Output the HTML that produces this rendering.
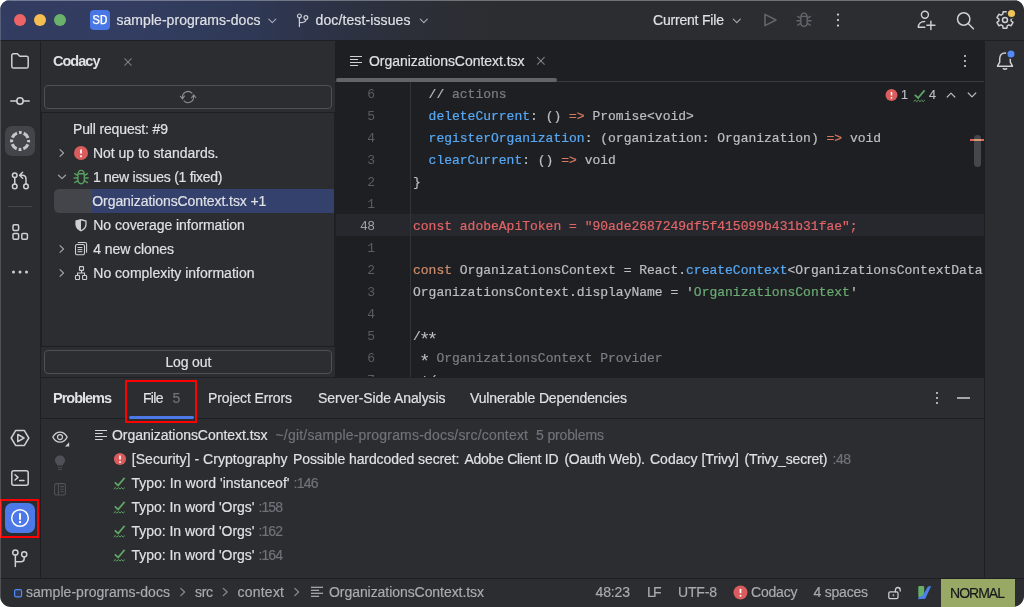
<!DOCTYPE html>
<html lang="en">
<head>
<meta charset="utf-8">
<title>sample-programs-docs – OrganizationsContext.tsx</title>
<style>
html,body{margin:0;padding:0;background:#fff;}
body{width:1024px;height:607px;overflow:hidden;position:relative;font-family:"Liberation Sans",sans-serif;}
#win{position:absolute;left:0;top:0;width:1024px;height:607px;border-radius:10px 10px 11px 11px;overflow:hidden;background:#2B2D30;will-change:transform;}
#win div,#win svg{position:absolute;}
.t{-webkit-text-stroke:0.18px currentColor;white-space:pre;height:20px;line-height:20px;font-size:13.5px;color:#DFE1E5;}
.ln{transform:translateY(2px);left:336px;width:38.4px;letter-spacing:-0.6px;height:22px;line-height:22px;text-align:right;font-family:"Liberation Mono",monospace;font-size:13px;color:#5A5D65;}
.cl{transform:translateY(2px);left:413px;height:22px;line-height:22px;white-space:pre;font-family:"Liberation Mono",monospace;font-size:13px;color:#BCBEC4;}
.cl span{position:static;-webkit-text-stroke:0.2px currentColor;}
.cl span.a{display:inline-block;width:7.8px;height:14px;line-height:14px;font-size:19px;text-indent:-1.8px;position:relative;top:4.8px;vertical-align:baseline;-webkit-text-stroke:0;}
svg{overflow:visible;fill:none;}
.s{stroke:#CED0D6;stroke-width:1.2;stroke-linecap:round;stroke-linejoin:round;fill:none;}
.d{stroke:#5A5D63;stroke-width:1.2;stroke-linecap:round;stroke-linejoin:round;fill:none;}
</style>
</head>
<body>
<div id="win">
<!-- title bar -->
<div id="titlebar" style="left:0;top:0;width:1024px;height:40px;background:linear-gradient(90deg,#313C60 0,#323D61 140px,#2F3855 250px,#2D3346 330px,#2C2F38 410px,#2B2D30 500px);"></div>
<div style="left:0;top:40px;width:1024px;height:1px;background:#1E1F22"></div>
<div style="left:14px;top:14px;width:12px;height:12px;border-radius:6px;background:#EC6466"></div>
<div style="left:34px;top:14px;width:12px;height:12px;border-radius:6px;background:#F4BE50"></div>
<div style="left:54px;top:14px;width:12px;height:12px;border-radius:6px;background:#6AB26C"></div>
<div style="left:90px;top:10px;width:20px;height:20px;border-radius:4px;background:#4876E4;"></div>
<div style="left:90px;top:10px;width:20px;height:20px;line-height:21px;text-align:center;color:#fff;font-family:'Liberation Mono',monospace;font-size:13px;letter-spacing:-0.3px;text-indent:-0.3px;-webkit-text-stroke:0.25px #fff;">SD</div>

<!-- main areas -->
<div id="stripeL" style="left:0;top:41px;width:40px;height:537px;background:#2B2D30"></div>
<div style="left:40px;top:41px;width:1px;height:537px;background:#1E1F22"></div>
<div id="editor" style="left:335px;top:41px;width:649px;height:336px;background:#1E1F22;overflow:hidden"></div>
<div style="left:984px;top:41px;width:1px;height:537px;background:#1E1F22"></div>
<div style="left:41px;top:377px;width:943px;height:1px;background:#1E1F22"></div>
<div style="left:0;top:578px;width:1024px;height:1px;background:#1E1F22"></div>

<!-- ===== title bar icons ===== -->
<svg style="left:268px;top:18px;transform:translate(0.3px,0.6px)" width="8" height="5"><path class="s" style="stroke:#A9ACB3;stroke-width:1.1" d="M0.5 0.5 L4 4 L7.5 0.5"/></svg>
<svg style="left:419px;top:18px;transform:translate(0.8px,0.6px)" width="8" height="5"><path class="s" style="stroke:#A9ACB3;stroke-width:1.1" d="M0.5 0.5 L4 4 L7.5 0.5"/></svg>
<svg style="left:732px;top:18px;transform:translate(0.8px,0.6px)" width="8" height="5"><path class="s" style="stroke:#A9ACB3;stroke-width:1.1" d="M0.5 0.5 L4 4 L7.5 0.5"/></svg>
<!-- branch -->
<svg style="left:296px;top:12px" width="14" height="16"><circle class="s" cx="3.4" cy="3.9" r="1.9"/><circle class="s" cx="9.9" cy="5.6" r="1.9"/><path class="s" d="M3.4 5.8 V14.6 M9.9 7.5 C9.9 10.2 7.5 10.7 3.6 10.7"/></svg>
<!-- run (disabled) -->
<svg style="left:762px;top:12px" width="16" height="16"><path class="d" style="stroke:#62656C;stroke-width:1.6" d="M3 2.4 L14 8 L3 13.6 Z"/></svg>
<!-- debug (disabled) -->
<svg style="left:795px;top:11px;transform:translate(0.9px,0.7px)" width="16" height="16"><path style="stroke:#62656C;stroke-width:1.4;stroke-linecap:butt;fill:none" d="M4.9 6.2 C4.9 3 6.2 1.4 8.1 1.4 C10 1.4 11.3 3 11.3 6.2 V10.6 C11.3 13.4 10 14.7 8.1 14.7 C6.2 14.7 4.9 13.4 4.9 10.6 Z M5.2 4.7 H11 M4.9 6.6 L1.3 4.3 M11.3 6.6 L14.9 4.3 M4.9 9 H0.6 M11.3 9 H15.6 M5 11.5 L1.3 13.8 M11.2 11.5 L14.9 13.8"/></svg>
<!-- kebab -->
<svg style="left:836px;top:12px" width="4" height="16"><circle cx="2" cy="2.6" r="1.15" fill="#CED0D6"/><circle cx="2" cy="8.1" r="1.15" fill="#CED0D6"/><circle cx="2" cy="13.6" r="1.15" fill="#CED0D6"/></svg>
<!-- add user -->
<svg style="left:916px;top:10px" width="20" height="20"><circle class="s" style="stroke-width:1.45" cx="8.9" cy="4.8" r="3.5"/><path class="s" style="stroke-width:1.45" d="M8.6 11.5 C5 11.5 2.4 13.8 2.3 17.2 H8.8 M14.9 11.2 V19.4 M10.9 15.2 H18.9"/></svg>
<!-- search -->
<svg style="left:956px;top:11px;transform:translate(0.0px,0.5px)" width="18" height="18"><circle class="s" style="stroke-width:1.5" cx="7.7" cy="7.5" r="6.2"/><path class="s" style="stroke-width:1.5" d="M12.2 12 L17.4 17.2"/></svg>
<!-- settings -->
<svg style="left:996px;top:10px" width="18" height="20"><path class="s" style="stroke-width:1.5" d="M11.22 4.21 L10.89 1.82 L7.11 1.82 L6.78 4.21 L5.10 5.18 L2.86 4.27 L0.97 7.54 L2.88 9.03 L2.88 10.97 L0.97 12.46 L2.86 15.73 L5.10 14.82 L6.78 15.79 L7.11 18.18 L10.89 18.18 L11.22 15.79 L12.90 14.82 L15.14 15.73 L17.03 12.46 L15.12 10.97 L15.12 9.03 L17.03 7.54 L15.14 4.27 L12.90 5.18 Z"/><circle class="s" style="stroke-width:1.5" cx="9" cy="10" r="2.5"/></svg>
<svg style="left:1006px;top:8px" width="11" height="11"><circle cx="5.5" cy="5.5" r="5.2" fill="#2B2D30"/><circle cx="5.5" cy="5.5" r="3.6" fill="#F2C55C"/></svg>

<!-- ===== left stripe ===== -->
<!-- folder -->
<svg style="left:10px;top:51px" width="20" height="20"><path class="s" style="stroke-width:1.5" d="M1.8 4.4 C1.8 3.5 2.5 2.8 3.4 2.8 H7.4 L9.8 5.2 H16.6 C17.5 5.2 18.2 5.9 18.2 6.8 V15.4 C18.2 16.3 17.5 17 16.6 17 H3.4 C2.5 17 1.8 16.3 1.8 15.4 Z"/></svg>
<!-- commit -->
<svg style="left:10px;top:91px" width="20" height="20"><circle class="s" style="stroke-width:1.5" cx="10" cy="10" r="3.2"/><path class="s" style="stroke-width:1.5" d="M0.8 10 H6.8 M13.2 10 H19.2"/></svg>
<!-- codacy active -->
<div style="left:5px;top:126px;width:30px;height:30px;border-radius:7px;background:#43454A"></div>
<svg style="left:10px;top:131px" width="20" height="20"><circle cx="10.1" cy="10" r="8.5" fill="none" stroke="#C4C6CC" stroke-width="3.1" stroke-dasharray="2.8 2 6.55 2" stroke-dashoffset="1.4"/></svg>
<!-- pull requests -->
<svg style="left:10px;top:171px" width="20" height="20"><circle class="s" style="stroke-width:1.5" cx="4.75" cy="4.25" r="2.3"/><circle class="s" style="stroke-width:1.5" cx="4.75" cy="15.4" r="2.3"/><circle class="s" style="stroke-width:1.5" cx="16" cy="15.4" r="2.3"/><path class="s" style="stroke-width:1.5" d="M4.75 6.6 V13.1 M16 13.1 V8 C16 5.6 14.8 4.2 12.4 4.2 H10 M12.6 1.2 L9.6 4.2 L12.6 7.2"/></svg>
<div style="left:8px;top:206px;width:24px;height:1px;background:#43454A"></div>
<!-- structure-like (3 squares) -->
<svg style="left:10px;top:223px" width="20" height="20"><rect class="s" style="stroke-width:1.5" x="3" y="1.8" width="5.6" height="5.6" rx="1.2"/><rect class="s" style="stroke-width:1.5" x="3" y="10.4" width="5.6" height="5.9" rx="1.2"/><rect class="s" style="stroke-width:1.5" x="11.8" y="10.4" width="5.6" height="5.9" rx="1.2"/></svg>
<!-- more -->
<svg style="left:10px;top:262px" width="20" height="20"><circle cx="3.5" cy="10" r="1.5" fill="#CED0D6"/><circle cx="10" cy="10" r="1.5" fill="#CED0D6"/><circle cx="16.5" cy="10" r="1.5" fill="#CED0D6"/></svg>
<!-- services -->
<svg style="left:10px;top:428px" width="20" height="20"><path class="s" style="stroke-width:1.5" d="M5.6 2.6 H14.4 L18.8 10 L14.4 17.4 H5.6 L1.2 10 Z M7.8 6.4 L14 10 L7.8 13.6 Z"/></svg>
<!-- terminal -->
<svg style="left:10px;top:468px" width="20" height="20"><rect class="s" style="stroke-width:1.5" x="1.8" y="2.8" width="16.4" height="14.4" rx="2"/><path class="s" style="stroke-width:1.5" d="M5 6.8 L8 9.4 L5 12 M9.6 12.6 H14"/></svg>
<!-- problems active -->
<div style="left:5px;top:503px;width:30px;height:30px;border-radius:7px;background:#4C78E8"></div>
<svg style="left:10px;top:508px" width="20" height="20"><circle cx="10" cy="10" r="8.3" fill="none" stroke="#fff" stroke-width="1.5"/><path d="M10 5.2 V11.7" stroke="#fff" stroke-width="2" stroke-linecap="butt"/><circle cx="10" cy="14" r="1.2" fill="#fff"/></svg>
<div style="left:0px;top:499px;width:35px;height:35px;border:2px solid #FF0000;"></div>
<!-- git -->
<svg style="left:10px;top:548px" width="20" height="20"><circle class="s" style="stroke-width:1.5" cx="5.35" cy="4.5" r="2.6"/><circle class="s" style="stroke-width:1.5" cx="14.2" cy="6.3" r="2.6"/><path class="s" style="stroke-width:1.5" d="M5.35 7.2 V18.6 M14.2 9 V10.6 C14.2 12.6 13.2 13.7 11.2 13.7 H5.6"/></svg>

<!-- ===== right stripe: bell ===== -->
<svg style="left:995px;top:51px" width="20" height="20"><path class="s" style="stroke-width:1.5" d="M2.5 15.2 L4.7 11.2 V8 C4.7 4.4 6.8 1.9 10 1.9 C13.2 1.9 15.3 4.4 15.3 8 V11.2 L17.5 15.2 Z M8.3 17.7 Q10 18.9 11.7 17.7"/></svg>
<svg style="left:1005px;top:48px;transform:translate(0.5px,0.5px)" width="11" height="11"><circle cx="5.5" cy="5.5" r="5" fill="#2B2D30"/><circle cx="5.5" cy="5.5" r="3.5" fill="#548AF7"/></svg>

<!-- ===== tool window ===== -->
<svg style="left:124px;top:58px" width="8" height="8"><path class="s" style="stroke:#7C7F86;stroke-width:1.05" d="M0.7 0.7 L7.3 7.3 M7.3 0.7 L0.7 7.3"/></svg>
<div style="left:44px;top:85px;width:286px;height:22px;border:1px solid #4E5157;border-radius:4px;"></div>
<svg style="left:180px;top:89px" width="16" height="16"><path class="s" style="stroke:#8C8F96;stroke-width:1.1" d="M12 4.1 A5.6 5.6 0 0 0 2.5 8.6 M0.4 7.4 L2.5 9.9 L4.5 7 M4 11.9 A5.6 5.6 0 0 0 13.6 7.4 M11.6 8.8 L13.7 5.9 L15.8 8.5"/></svg>
<div style="left:41px;top:112px;width:294px;height:1px;background:#1E1F22"></div>
<div style="left:41px;top:113px;width:1px;height:233px;background:#1E1F22"></div>
<div style="left:41px;top:346px;width:294px;height:1px;background:#1E1F22"></div>
<div style="left:334px;top:113px;width:1px;height:233px;background:#1E1F22"></div>
<div style="left:54px;top:189px;width:44px;height:24px;border-radius:5px;background:#43454A"></div>
<div style="left:92px;top:189px;width:242px;height:24px;background:#34416D"></div>
<!-- chevrons -->
<svg style="left:59px;top:148px" width="6" height="10"><path class="s" style="stroke:#9DA0A8" d="M1 1.6 L4.5 5 L1 8.4"/></svg>
<svg style="left:59px;top:244px" width="6" height="10"><path class="s" style="stroke:#9DA0A8" d="M1 1.6 L4.5 5 L1 8.4"/></svg>
<svg style="left:59px;top:268px" width="6" height="10"><path class="s" style="stroke:#9DA0A8" d="M1 1.6 L4.5 5 L1 8.4"/></svg>
<svg style="left:57px;top:174px" width="10" height="6"><path class="s" style="stroke:#9DA0A8" d="M1.5 1.2 L5 4.6 L8.5 1.2"/></svg>
<!-- error circle -->
<svg style="left:74px;top:146px" width="14" height="14"><circle cx="7" cy="7" r="7" fill="#DB5C5C"/><path d="M7 3.4 V7.6" stroke="#fff" stroke-width="1.7" stroke-linecap="butt"/><circle cx="7" cy="10.2" r="1" fill="#fff"/></svg>
<!-- green bug -->
<svg style="left:73px;top:169px" width="16" height="16"><path style="stroke:#5A9E5F;stroke-width:1.4;stroke-linecap:butt;fill:none" d="M4.9 6.2 C4.9 3 6.2 1.4 8.1 1.4 C10 1.4 11.3 3 11.3 6.2 V10.6 C11.3 13.4 10 14.7 8.1 14.7 C6.2 14.7 4.9 13.4 4.9 10.6 Z M5.2 4.7 H11 M4.9 6.6 L1.3 4.3 M11.3 6.6 L14.9 4.3 M4.9 9 H0.6 M11.3 9 H15.6 M5 11.5 L1.3 13.8 M11.2 11.5 L14.9 13.8"/></svg>
<!-- shield -->
<svg style="left:74px;top:218px" width="14" height="14"><path d="M7 1 L12.6 2.6 V6.6 C12.6 10 10.2 12.2 7 13.4 C3.8 12.2 1.4 10 1.4 6.6 V2.6 Z" fill="#CED0D6"/><path d="M7 2.4 L11.3 3.6 V6.6 C11.3 9.2 9.5 10.9 7 12 Z" fill="#2B2D30"/></svg>
<!-- clones -->
<svg style="left:74px;top:242px" width="14" height="14"><rect class="s" style="stroke-width:1.1" x="1.5" y="2.5" width="9" height="10.2" rx="1.5"/><path class="s" style="stroke-width:1.1" d="M4.2 0.5 H11 C12 0.5 12.6 1.1 12.6 2.1 V10.2"/><path stroke="#CED0D6" stroke-width="1" d="M3.6 5.5 H8.4 M3.6 7.6 H8.4 M3.6 9.7 H8.4"/></svg>
<!-- complexity -->
<svg style="left:74px;top:266px" width="14" height="14"><rect class="s" style="stroke-width:1.1" x="5.5" y="0.6" width="4" height="3.8" rx="0.5"/><rect class="s" style="stroke-width:1.1" x="1.5" y="9.5" width="4" height="4" rx="0.5"/><rect class="s" style="stroke-width:1.1" x="8.6" y="9.5" width="4" height="4" rx="0.5"/><path class="s" style="stroke-width:1.1" d="M7.5 4.5 V7 M3.5 9.5 V7 H10.6 V9.5"/></svg>
<!-- log out button -->
<div style="left:44px;top:350px;width:286px;height:22px;border:1px solid #4E5157;border-radius:4px;"></div>

<!-- ===== editor tab ===== -->
<svg style="left:350px;top:56px;transform:translate(0.0px,0.5px)" width="12" height="10"><path stroke="#CED0D6" stroke-width="1.15" d="M0 0 H12 M0 3 H8.1 M0 6 H12 M0 9 H8.1"/></svg>
<svg style="left:537px;top:57px" width="8" height="8"><path class="s" style="stroke:#7E8288;stroke-width:1.05" d="M0.4 0.4 L7.3 7.3 M7.3 0.4 L0.4 7.3"/></svg>
<div style="left:335px;top:81px;width:649px;height:1px;background:#393B40"></div>
<div style="left:336px;top:78px;width:221px;height:3.5px;border-radius:2px;background:#626469"></div>
<svg style="left:963px;top:54px" width="4" height="14"><circle cx="2" cy="2" r="1.05" fill="#CED0D6"/><circle cx="2" cy="7" r="1.05" fill="#CED0D6"/><circle cx="2" cy="12" r="1.05" fill="#CED0D6"/></svg>

<!-- ===== bottom panel ===== -->
<div style="left:41px;top:418px;width:943px;height:1px;background:#1E1F22"></div>
<div style="left:129px;top:415.5px;width:64.5px;height:3.5px;border-radius:2px;background:#4C78E8"></div>
<div style="left:125px;top:380px;width:68px;height:39px;border:2px solid #FF0000;"></div>
<svg style="left:935px;top:391px" width="4" height="14"><circle cx="2" cy="2" r="1.05" fill="#CED0D6"/><circle cx="2" cy="7" r="1.05" fill="#CED0D6"/><circle cx="2" cy="12" r="1.05" fill="#CED0D6"/></svg>
<div style="left:956.5px;top:397.4px;width:13.3px;height:1.3px;background:#A4A6AC"></div>
<!-- eye -->
<svg style="left:52px;top:429px;transform:translate(0.0px,0.5px)" width="17" height="16"><path class="s" d="M0.8 7.6 C2.6 4.2 5.2 2.6 8 2.6 C10.8 2.6 13.4 4.2 15.2 7.6 C13.4 11 10.8 12.6 8 12.6 C5.2 12.6 2.6 11 0.8 7.6 Z"/><circle class="s" cx="8" cy="7.6" r="2.5"/><path d="M17.2 12.8 V17 H13 Z" fill="#CED0D6"/></svg>
<!-- bulb dim -->
<svg style="left:54px;top:455px" width="12" height="15"><path d="M6 0.6 C3 0.6 1 2.8 1 5.4 C1 7.2 2 8.4 3 9.2 V10.6 H9 V9.2 C10 8.4 11 7.2 11 5.4 C11 2.8 9 0.6 6 0.6 Z" fill="#4E5157"/><path d="M3.6 12.3 H8.4 M3.9 14.4 H8.1" stroke="#4E5157" stroke-width="0.9"/></svg>
<!-- layout dim -->
<svg style="left:54px;top:483px" width="12" height="13"><rect x="0.6" y="0.6" width="10.8" height="11.4" rx="1.6" fill="none" stroke="#4E5157" stroke-width="1.1"/><path d="M4.4 0.6 V12 M6.2 3.6 H9.8 M6.2 6.2 H9.8 M6.2 8.8 H9.8" stroke="#4E5157" stroke-width="1.1"/></svg>
<!-- file icon -->
<svg style="left:95px;top:430px;transform:translate(0.0px,0.5px)" width="12" height="10"><path stroke="#D2D4D9" stroke-width="1.1" d="M0 0 H12 M0 3 H7.7 M0 6 H12 M0 9 H7.7"/></svg>
<!-- error -->
<svg style="left:113px;top:452px;transform:translate(0.5px,0.5px)" width="13" height="13"><circle cx="6.5" cy="6.5" r="6.1" fill="#D95B5D"/><path d="M6.5 3.1 V7" stroke="#fff" stroke-width="1.6" stroke-linecap="butt"/><circle cx="6.5" cy="9.5" r="0.95" fill="#fff"/></svg>
<svg style="left:113px;top:475px;transform:translate(0.0px,0.5px)" width="14" height="15"><path d="M1.8 6.9 L5.1 10 L11.6 2.3" stroke="#5FA463" stroke-width="1.8" fill="none" stroke-linecap="butt" stroke-linejoin="miter"/><path d="M0.6 13.6 L2.2 12.1 L3.8 13.6 L5.4 12.1 L7 13.6 L8.6 12.1 L10.2 13.6 L11.8 12.1" stroke="#5FA463" stroke-width="1" fill="none"/></svg>
<svg style="left:113px;top:499px;transform:translate(0.0px,0.5px)" width="14" height="15"><path d="M1.8 6.9 L5.1 10 L11.6 2.3" stroke="#5FA463" stroke-width="1.8" fill="none" stroke-linecap="butt" stroke-linejoin="miter"/><path d="M0.6 13.6 L2.2 12.1 L3.8 13.6 L5.4 12.1 L7 13.6 L8.6 12.1 L10.2 13.6 L11.8 12.1" stroke="#5FA463" stroke-width="1" fill="none"/></svg>
<svg style="left:113px;top:523px;transform:translate(0.0px,0.5px)" width="14" height="15"><path d="M1.8 6.9 L5.1 10 L11.6 2.3" stroke="#5FA463" stroke-width="1.8" fill="none" stroke-linecap="butt" stroke-linejoin="miter"/><path d="M0.6 13.6 L2.2 12.1 L3.8 13.6 L5.4 12.1 L7 13.6 L8.6 12.1 L10.2 13.6 L11.8 12.1" stroke="#5FA463" stroke-width="1" fill="none"/></svg>
<svg style="left:113px;top:547px;transform:translate(0.0px,0.5px)" width="14" height="15"><path d="M1.8 6.9 L5.1 10 L11.6 2.3" stroke="#5FA463" stroke-width="1.8" fill="none" stroke-linecap="butt" stroke-linejoin="miter"/><path d="M0.6 13.6 L2.2 12.1 L3.8 13.6 L5.4 12.1 L7 13.6 L8.6 12.1 L10.2 13.6 L11.8 12.1" stroke="#5FA463" stroke-width="1" fill="none"/></svg>


<!-- ===== inspection widget ===== -->
<svg style="left:885px;top:89px;transform:translate(0.5px,0.0px)" width="12" height="12"><circle cx="6" cy="6" r="6" fill="#DB5C5C"/><path d="M6 2.9 V6.5" stroke="#fff" stroke-width="1.5" stroke-linecap="butt"/><circle cx="6" cy="8.8" r="0.9" fill="#fff"/></svg>
<svg style="left:913px;top:88px" width="14" height="15"><path d="M1.8 6.9 L5.1 10 L11.6 2.3" stroke="#5FA463" stroke-width="1.8" fill="none" stroke-linecap="butt" stroke-linejoin="miter"/><path d="M0.6 13.6 L2.2 12.1 L3.8 13.6 L5.4 12.1 L7 13.6 L8.6 12.1 L10.2 13.6 L11.8 12.1" stroke="#5FA463" stroke-width="1" fill="none"/></svg>
<svg style="left:946px;top:92px;transform:translate(0.5px,0.0px)" width="9" height="6"><path class="s" style="stroke:#B4B8BF" d="M0.7 5 L4.5 1.2 L8.3 5"/></svg>
<svg style="left:967px;top:92px;transform:translate(0.5px,0.0px)" width="9" height="6"><path class="s" style="stroke:#B4B8BF" d="M0.7 1 L4.5 4.8 L8.3 1"/></svg>
<!-- scrollbar -->
<div style="left:974px;top:135px;width:7.2px;height:32px;border-radius:3.6px;background:#45474C"></div>
<div style="left:970px;top:138.8px;width:14px;height:2.4px;background:#E26466"></div>
<div style="left:974px;top:138.8px;width:7.2px;height:2.4px;background:#D99A6C"></div>

<!-- ===== status bar ===== -->
<svg style="left:14px;top:589px" width="8" height="8"><rect x="0.6" y="0.6" width="7" height="7.2" rx="1.6" fill="#2E3854" stroke="#548AF7" stroke-width="1.2"/></svg>
<svg style="left:180px;top:587px;transform:translate(0.0px,0.5px)" width="6" height="9"><path class="s" style="stroke:#868A91;stroke-width:1.3" d="M0.8 0.9 L4.6 4.5 L0.8 8.1"/></svg>
<svg style="left:222px;top:587px;transform:translate(0.5px,0.5px)" width="6" height="9"><path class="s" style="stroke:#868A91;stroke-width:1.3" d="M0.8 0.9 L4.6 4.5 L0.8 8.1"/></svg>
<svg style="left:294px;top:587px;transform:translate(0.0px,0.5px)" width="6" height="9"><path class="s" style="stroke:#868A91;stroke-width:1.3" d="M0.8 0.9 L4.6 4.5 L0.8 8.1"/></svg>
<svg style="left:311px;top:587px;transform:translate(0.0px,0.3px)" width="12" height="10"><path stroke="#C8CAD0" stroke-width="1.15" d="M0 0 H12 M0 3 H8.1 M0 6 H12 M0 9 H8.1"/></svg>
<svg style="left:733px;top:585px;transform:translate(0.5px,0.5px)" width="14" height="14"><circle cx="7" cy="7" r="7" fill="#DB5C5C"/><path d="M7 3.4 V7.6" stroke="#fff" stroke-width="1.7" stroke-linecap="butt"/><circle cx="7" cy="10.2" r="1" fill="#fff"/></svg>
<!-- lock -->
<svg style="left:887px;top:586px;transform:translate(0.8px,0.0px)" width="14" height="14"><rect x="1" y="5.8" width="9.2" height="6.8" rx="1.4" fill="none" stroke="#CED0D6" stroke-width="1.25"/><path d="M7.6 5.8 V3.9 C7.6 2.4 8.6 1.5 10 1.5 C11.4 1.5 12.4 2.4 12.4 3.9 V5" fill="none" stroke="#CED0D6" stroke-width="1.3" stroke-linecap="round"/><rect x="4.9" y="8.1" width="1.5" height="2.3" fill="#9A9CA3"/></svg>
<!-- V icon -->
<svg style="left:917px;top:585px" width="15" height="15"><rect x="1.3" y="1.1" width="5.9" height="11.2" rx="1.2" fill="#68AE68"/><path d="M14.2 1 L10.9 1.5 L5.8 10.6 L1.2 12.6 L1.3 14.2 L8.3 13.7 Z" fill="#4A80E8"/></svg>
<div style="left:940.5px;top:579px;width:74px;height:28px;background:#98A965"></div>

<div style="left:0;top:82px;width:984px;height:295px;overflow:hidden"><div style="left:0;top:-82px;width:984px;height:400px"><div class="ln" style="top:82px;">6</div>
<div class="cl" style="top:82px"><span style="color:#BCBEC4">  // </span><span style="color:#7A7E85">actions</span></div>
<div class="ln" style="top:104px;">5</div>
<div class="cl" style="top:104px"><span style="color:#56A8F5">  deleteCurrent</span><span style="color:#BCBEC4">: () </span><span style="color:#D8795F">=&gt;</span><span style="color:#BCBEC4"> Promise&lt;void&gt;</span></div>
<div class="ln" style="top:126px;">4</div>
<div class="cl" style="top:126px"><span style="color:#56A8F5">  registerOrganization</span><span style="color:#BCBEC4">: (organization: Organization) </span><span style="color:#D8795F">=&gt;</span><span style="color:#BCBEC4"> void</span></div>
<div class="ln" style="top:148px;">3</div>
<div class="cl" style="top:148px"><span style="color:#56A8F5">  clearCurrent</span><span style="color:#BCBEC4">: () </span><span style="color:#D8795F">=&gt;</span><span style="color:#BCBEC4"> void</span></div>
<div class="ln" style="top:170px;">2</div>
<div class="cl" style="top:170px"><span style="color:#BCBEC4">}</span></div>
<div class="ln" style="top:192px;">1</div>
<div style="position:absolute;left:336px;top:214px;width:648px;height:22px;background:#26282E"></div>
<div class="ln" style="top:214px;color:#A1A3AB;">48</div>
<div class="cl" style="top:214px"><span style="color:#E26466">const adobeApiToken = "90ade2687249df5f415099b431b31fae";</span></div>
<div class="ln" style="top:236px;">1</div>
<div class="ln" style="top:258px;">2</div>
<div class="cl" style="top:258px"><span style="color:#CF8E6D">const</span><span style="color:#BCBEC4"> OrganizationsContext = React.</span><span style="color:#56A8F5">createContext</span><span style="color:#BCBEC4">&lt;OrganizationsContextData</span></div>
<div class="ln" style="top:280px;">3</div>
<div class="cl" style="top:280px"><span style="color:#BCBEC4">OrganizationsContext.displayName = '</span><span style="color:#6AAB73">OrganizationsContext</span><span style="color:#BCBEC4">'</span></div>
<div class="ln" style="top:302px;">4</div>
<div class="ln" style="top:324px;">5</div>
<div class="cl" style="top:324px"><span style="color:#BCBEC4">/</span><span class="a" style="color:#BCBEC4">*</span><span class="a" style="color:#BCBEC4">*</span></div>
<div class="ln" style="top:346px;">6</div>
<div class="cl" style="top:346px"><span style="color:#BCBEC4"> </span><span class="a" style="color:#BCBEC4">*</span><span style="color:#BCBEC4"> </span><span style="color:#7A7E85">OrganizationsContext Provider</span></div>
<div class="ln" style="top:368px;">7</div>
<div class="cl" style="top:368px"><span style="color:#BCBEC4"> </span><span class="a" style="color:#BCBEC4">*</span><span style="color:#BCBEC4">/</span></div></div></div>
<div style="left:410px;top:82px;width:1px;height:295px;background:#313438"></div>

<div class="t" style="left:116.5px;top:10.0px;color:#DFE1E5;font-size:14px;letter-spacing:0.044px;">sample-programs-docs</div>
<div class="t" style="left:315.5px;top:10.0px;color:#DFE1E5;font-size:14px;letter-spacing:0.116px;">doc/test-issues</div>
<div class="t" style="left:653.0px;top:10.0px;color:#DFE1E5;font-size:14px;letter-spacing:-0.195px;">Current File</div>
<div class="t" style="left:53.0px;top:51.0px;color:#DFE1E5;font-size:14.5px;letter-spacing:-0.978px;font-weight:bold;-webkit-text-stroke:0;">Codacy</div>
<div class="t" style="left:73.0px;top:119.0px;color:#DFE1E5;font-size:14px;letter-spacing:-0.153px;">Pull request: #9</div>
<div class="t" style="left:93.0px;top:143.0px;color:#DFE1E5;font-size:14px;letter-spacing:-0.030px;">Not up to standards.</div>
<div class="t" style="left:93.0px;top:167.0px;color:#DFE1E5;font-size:14px;letter-spacing:-0.281px;">1 new issues (1 fixed)</div>
<div class="t" style="left:92.3px;top:191.0px;color:#DFE1E5;font-size:14px;letter-spacing:-0.083px;">OrganizationsContext.tsx +1</div>
<div class="t" style="left:93.3px;top:215.0px;color:#DFE1E5;font-size:14px;letter-spacing:-0.047px;">No coverage information</div>
<div class="t" style="left:93.3px;top:239.0px;color:#DFE1E5;font-size:14px;letter-spacing:-0.093px;">4 new clones</div>
<div class="t" style="left:93.3px;top:263.0px;color:#DFE1E5;font-size:14px;letter-spacing:0.006px;">No complexity information</div>
<div class="t" style="left:165.4px;top:352.0px;color:#DFE1E5;font-size:14px;letter-spacing:-0.136px;">Log out</div>
<div class="t" style="left:369.0px;top:51.0px;color:#DFE1E5;font-size:14px;letter-spacing:-0.039px;">OrganizationsContext.tsx</div>
<div class="t" style="left:53.0px;top:388.0px;color:#DFE1E5;font-size:14.5px;letter-spacing:-1.013px;font-weight:bold;-webkit-text-stroke:0;">Problems</div>
<div class="t" style="left:143.0px;top:388.0px;color:#DFE1E5;font-size:14px;letter-spacing:-0.688px;">File</div>
<div class="t" style="left:172.5px;top:388.0px;color:#6F737A;font-size:14px;letter-spacing:-1.297px;">5</div>
<div class="t" style="left:208.0px;top:388.0px;color:#DFE1E5;font-size:14px;letter-spacing:-0.121px;">Project Errors</div>
<div class="t" style="left:318.0px;top:388.0px;color:#DFE1E5;font-size:14px;letter-spacing:-0.088px;">Server-Side Analysis</div>
<div class="t" style="left:470.0px;top:388.0px;color:#DFE1E5;font-size:14px;letter-spacing:-0.129px;">Vulnerable Dependencies</div>
<div class="t" style="left:112.0px;top:425.0px;color:#DFE1E5;font-size:14px;letter-spacing:-0.039px;">OrganizationsContext.tsx</div>
<div class="t" style="left:275.5px;top:425.0px;color:#6F737A;font-size:14px;letter-spacing:0.190px;">~/git/sample-programs-docs/src/context</div>
<div class="t" style="left:536.0px;top:425.0px;color:#6F737A;font-size:14px;letter-spacing:-0.141px;">5 problems</div>
<div class="t" style="left:131.8px;top:449.0px;color:#DFE1E5;font-size:14px;letter-spacing:0.036px;">[Security] - Cryptography</div>
<div class="t" style="left:293.0px;top:449.0px;color:#DFE1E5;font-size:14px;letter-spacing:-0.095px;">Possible hardcoded secret:</div>
<div class="t" style="left:464.5px;top:449.0px;color:#DFE1E5;font-size:14px;letter-spacing:-0.290px;">Adobe Client ID</div>
<div class="t" style="left:564.5px;top:449.0px;color:#DFE1E5;font-size:14px;letter-spacing:-0.298px;">(Oauth Web).</div>
<div class="t" style="left:650.0px;top:449.0px;color:#DFE1E5;font-size:14px;letter-spacing:0.004px;">Codacy [Trivy]</div>
<div class="t" style="left:744.5px;top:449.0px;color:#DFE1E5;font-size:14px;letter-spacing:-0.157px;">(Trivy_secret)</div>
<div class="t" style="left:832.5px;top:449.0px;color:#6F737A;font-size:14px;letter-spacing:-0.484px;">:48</div>
<div class="t" style="left:131.5px;top:473.0px;color:#DFE1E5;font-size:14px;letter-spacing:0.036px;">Typo: In word 'instanceof'</div>
<div class="t" style="left:293.5px;top:473.0px;color:#6F737A;font-size:14px;letter-spacing:-0.750px;">:146</div>
<div class="t" style="left:131.5px;top:497.0px;color:#DFE1E5;font-size:14px;letter-spacing:-0.033px;">Typo: In word 'Orgs'</div>
<div class="t" style="left:258.5px;top:497.0px;color:#6F737A;font-size:14px;letter-spacing:-0.917px;">:158</div>
<div class="t" style="left:131.5px;top:521.0px;color:#DFE1E5;font-size:14px;letter-spacing:-0.033px;">Typo: In word 'Orgs'</div>
<div class="t" style="left:258.5px;top:521.0px;color:#6F737A;font-size:14px;letter-spacing:-0.917px;">:162</div>
<div class="t" style="left:131.5px;top:545.0px;color:#DFE1E5;font-size:14px;letter-spacing:-0.033px;">Typo: In word 'Orgs'</div>
<div class="t" style="left:258.5px;top:545.0px;color:#6F737A;font-size:14px;letter-spacing:-0.917px;">:164</div>
<div class="t" style="left:901.0px;top:85.0px;color:#BCBEC4;font-size:12.5px;letter-spacing:-2.453px;">1</div>
<div class="t" style="left:929.0px;top:85.0px;color:#BCBEC4;font-size:12.5px;letter-spacing:-0.453px;">4</div>
<div class="t" style="left:26.0px;top:582.0px;color:#A9ABB2;font-size:14px;letter-spacing:0.044px;">sample-programs-docs</div>
<div class="t" style="left:195.0px;top:582.0px;color:#A9ABB2;font-size:14px;letter-spacing:-0.336px;">src</div>
<div class="t" style="left:237.5px;top:582.0px;color:#A9ABB2;font-size:14px;letter-spacing:0.227px;">context</div>
<div class="t" style="left:329.0px;top:582.0px;color:#A9ABB2;font-size:14px;letter-spacing:-0.061px;">OrganizationsContext.tsx</div>
<div class="t" style="left:595.5px;top:582.0px;color:#A9ABB2;font-size:14px;letter-spacing:-0.137px;">48:23</div>
<div class="t" style="left:647.0px;top:582.0px;color:#A9ABB2;font-size:14px;letter-spacing:-1.844px;">LF</div>
<div class="t" style="left:678.0px;top:582.0px;color:#A9ABB2;font-size:14px;letter-spacing:-0.168px;">UTF-8</div>
<div class="t" style="left:751.0px;top:582.0px;color:#A9ABB2;font-size:14px;letter-spacing:-0.194px;">Codacy</div>
<div class="t" style="left:813.5px;top:582.0px;color:#A9ABB2;font-size:14px;letter-spacing:-0.221px;">4 spaces</div>
<div class="t" style="left:950.0px;top:583.0px;color:#17181A;font-size:14px;letter-spacing:-0.981px;">NORMAL</div>
<div style="left:0;top:0;width:1024px;height:1px;background:rgba(255,255,255,.32)"></div>
<div style="left:0;top:0;width:1px;height:607px;background:rgba(255,255,255,.18)"></div>
</div>
</body>
</html>
